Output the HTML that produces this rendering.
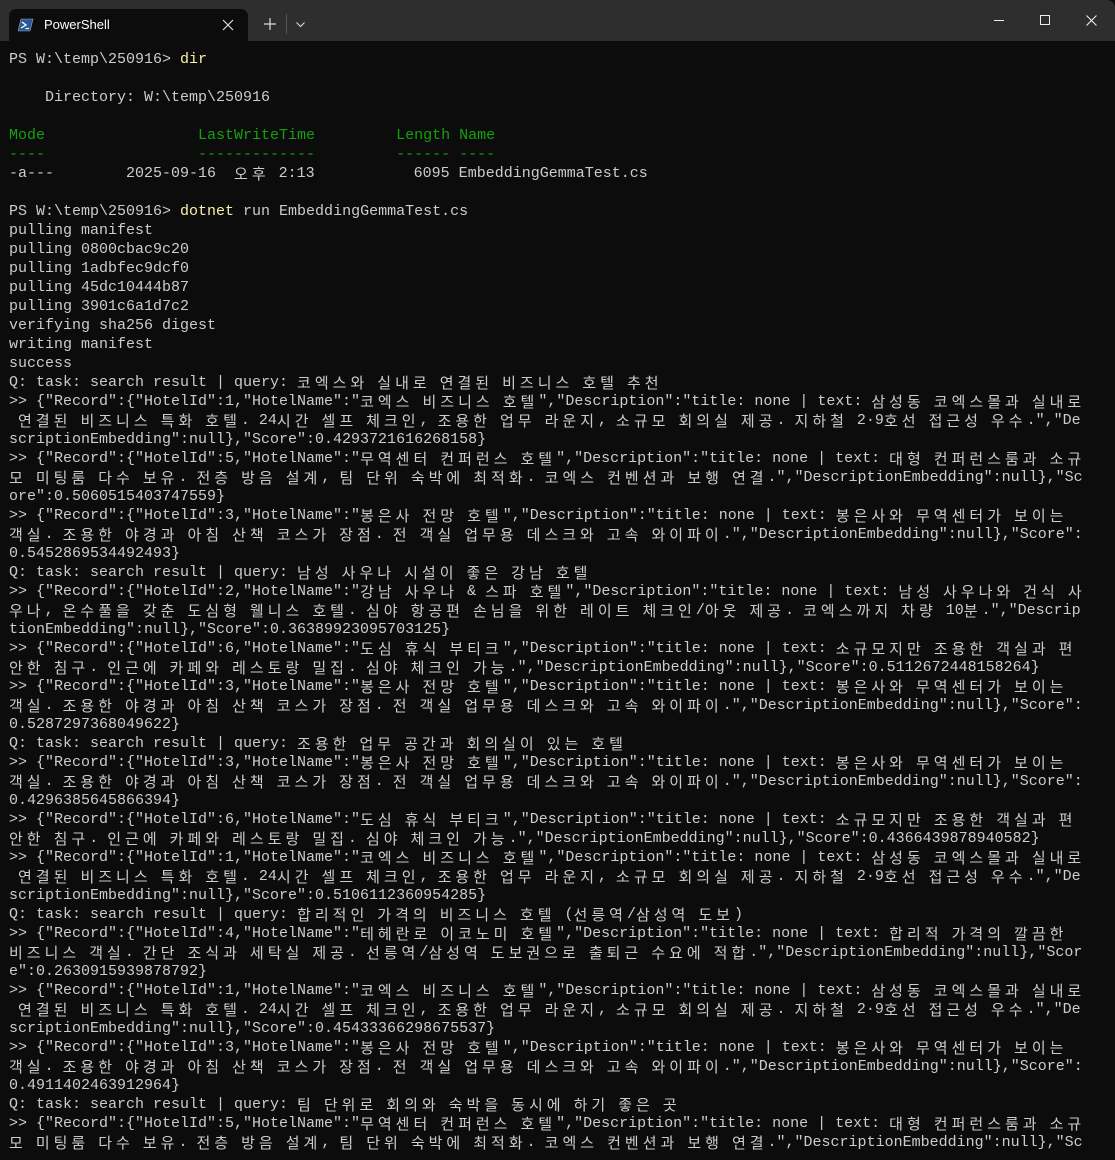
<!DOCTYPE html>
<html><head><meta charset="utf-8">
<style>
html,body{margin:0;padding:0;background:#0c0c0c;width:1115px;height:1160px;overflow:hidden}
#tb{position:absolute;left:0;top:0;width:1115px;height:41px;background:#2e2e2e;border-top-right-radius:8px}
#tab{position:absolute;left:9px;top:9px;width:239px;height:32px;background:#0c0c0c;border-radius:7px 7px 0 0}
#tab .t{position:absolute;left:35px;top:8px;color:#fff;font:13px "Liberation Sans",sans-serif}
pre{position:absolute;left:9px;top:50px;margin:0;color:#cccccc;font:15px/19px "Liberation Mono",monospace;white-space:pre}
.g{color:#13a10e}.y{color:#f9f1a5}
.k{font-family:"Noto Sans CJK KR","NanumGothic",sans-serif;letter-spacing:4px;font-size:15px;line-height:19px;vertical-align:top;display:inline-block;height:19px;overflow:visible}
</style></head><body>
<div id="tb">
 <div id="tab">
  <svg style="position:absolute;left:9px;top:9px" width="16" height="14" viewBox="0 0 16 14"><path d="M3 1h12l-3 12H0z" fill="#2b5797" stroke="#9ab" stroke-width=".6"/><path d="M4 4l4 3-5 3" stroke="#fff" stroke-width="1.3" fill="none"/><path d="M7.5 10.5h3.5" stroke="#fff" stroke-width="1.2"/></svg>
  <span class="t">PowerShell</span>
  <svg style="position:absolute;left:213px;top:10px" width="12" height="12"><path d="M1 1l10 10M11 1L1 11" stroke="#ddd" stroke-width="1.2"/></svg>
 </div>
 <svg style="position:absolute;left:264px;top:18px" width="12" height="12"><path d="M6 0v12M0 6h12" stroke="#ddd" stroke-width="1.2"/></svg>
 <div style="position:absolute;left:286px;top:14px;width:1px;height:20px;background:#555"></div>
 <svg style="position:absolute;left:296px;top:22px" width="9" height="6"><path d="M.5 .5l4 4 4-4" stroke="#ddd" stroke-width="1.1" fill="none"/></svg>
 <div style="position:absolute;left:994px;top:20px;width:10px;height:1px;background:#eee"></div>
 <div style="position:absolute;left:1040px;top:15px;width:8px;height:8px;border:1px solid #eee"></div>
 <svg style="position:absolute;left:1086px;top:15px" width="11" height="11"><path d="M.5 .5l10 10M10.5 .5l-10 10" stroke="#eee" stroke-width="1.1"/></svg>
</div>
<pre id="p">PS W:\temp\250916&gt; <span class="y">dir</span>

    Directory: W:\temp\250916

<span class="g">Mode                 LastWriteTime         Length Name</span>
<span class="g">----                 -------------         ------ ----</span>
-a---        2025-09-16  오후 2:13           6095 EmbeddingGemmaTest.cs

PS W:\temp\250916&gt; <span class="y">dotnet</span> run EmbeddingGemmaTest.cs
pulling manifest
pulling 0800cbac9c20
pulling 1adbfec9dcf0
pulling 45dc10444b87
pulling 3901c6a1d7c2
verifying sha256 digest
writing manifest
success
Q: task: search result | query: 코엑스와 실내로 연결된 비즈니스 호텔 추천
&gt;&gt; {"Record":{"HotelId":1,"HotelName":"코엑스 비즈니스 호텔","Description":"title: none | text: 삼성동 코엑스몰과 실내로
 연결된 비즈니스 특화 호텔. 24시간 셀프 체크인, 조용한 업무 라운지, 소규모 회의실 제공. 지하철 2·9호선 접근성 우수.","De
scriptionEmbedding":null},"Score":0.4293721616268158}
&gt;&gt; {"Record":{"HotelId":5,"HotelName":"무역센터 컨퍼런스 호텔","Description":"title: none | text: 대형 컨퍼런스룸과 소규
모 미팅룸 다수 보유. 전층 방음 설계, 팀 단위 숙박에 최적화. 코엑스 컨벤션과 보행 연결.","DescriptionEmbedding":null},"Sc
ore":0.5060515403747559}
&gt;&gt; {"Record":{"HotelId":3,"HotelName":"봉은사 전망 호텔","Description":"title: none | text: 봉은사와 무역센터가 보이는
객실. 조용한 야경과 아침 산책 코스가 장점. 전 객실 업무용 데스크와 고속 와이파이.","DescriptionEmbedding":null},"Score":
0.5452869534492493}
Q: task: search result | query: 남성 사우나 시설이 좋은 강남 호텔
&gt;&gt; {"Record":{"HotelId":2,"HotelName":"강남 사우나 &amp; 스파 호텔","Description":"title: none | text: 남성 사우나와 건식 사
우나, 온수풀을 갖춘 도심형 웰니스 호텔. 심야 항공편 손님을 위한 레이트 체크인/아웃 제공. 코엑스까지 차량 10분.","Descrip
tionEmbedding":null},"Score":0.36389923095703125}
&gt;&gt; {"Record":{"HotelId":6,"HotelName":"도심 휴식 부티크","Description":"title: none | text: 소규모지만 조용한 객실과 편
안한 침구. 인근에 카페와 레스토랑 밀집. 심야 체크인 가능.","DescriptionEmbedding":null},"Score":0.5112672448158264}
&gt;&gt; {"Record":{"HotelId":3,"HotelName":"봉은사 전망 호텔","Description":"title: none | text: 봉은사와 무역센터가 보이는
객실. 조용한 야경과 아침 산책 코스가 장점. 전 객실 업무용 데스크와 고속 와이파이.","DescriptionEmbedding":null},"Score":
0.5287297368049622}
Q: task: search result | query: 조용한 업무 공간과 회의실이 있는 호텔
&gt;&gt; {"Record":{"HotelId":3,"HotelName":"봉은사 전망 호텔","Description":"title: none | text: 봉은사와 무역센터가 보이는
객실. 조용한 야경과 아침 산책 코스가 장점. 전 객실 업무용 데스크와 고속 와이파이.","DescriptionEmbedding":null},"Score":
0.4296385645866394}
&gt;&gt; {"Record":{"HotelId":6,"HotelName":"도심 휴식 부티크","Description":"title: none | text: 소규모지만 조용한 객실과 편
안한 침구. 인근에 카페와 레스토랑 밀집. 심야 체크인 가능.","DescriptionEmbedding":null},"Score":0.4366439878940582}
&gt;&gt; {"Record":{"HotelId":1,"HotelName":"코엑스 비즈니스 호텔","Description":"title: none | text: 삼성동 코엑스몰과 실내로
 연결된 비즈니스 특화 호텔. 24시간 셀프 체크인, 조용한 업무 라운지, 소규모 회의실 제공. 지하철 2·9호선 접근성 우수.","De
scriptionEmbedding":null},"Score":0.5106112360954285}
Q: task: search result | query: 합리적인 가격의 비즈니스 호텔 (선릉역/삼성역 도보)
&gt;&gt; {"Record":{"HotelId":4,"HotelName":"테헤란로 이코노미 호텔","Description":"title: none | text: 합리적 가격의 깔끔한
비즈니스 객실. 간단 조식과 세탁실 제공. 선릉역/삼성역 도보권으로 출퇴근 수요에 적합.","DescriptionEmbedding":null},"Scor
e":0.2630915939878792}
&gt;&gt; {"Record":{"HotelId":1,"HotelName":"코엑스 비즈니스 호텔","Description":"title: none | text: 삼성동 코엑스몰과 실내로
 연결된 비즈니스 특화 호텔. 24시간 셀프 체크인, 조용한 업무 라운지, 소규모 회의실 제공. 지하철 2·9호선 접근성 우수.","De
scriptionEmbedding":null},"Score":0.45433366298675537}
&gt;&gt; {"Record":{"HotelId":3,"HotelName":"봉은사 전망 호텔","Description":"title: none | text: 봉은사와 무역센터가 보이는
객실. 조용한 야경과 아침 산책 코스가 장점. 전 객실 업무용 데스크와 고속 와이파이.","DescriptionEmbedding":null},"Score":
0.4911402463912964}
Q: task: search result | query: 팀 단위로 회의와 숙박을 동시에 하기 좋은 곳
&gt;&gt; {"Record":{"HotelId":5,"HotelName":"무역센터 컨퍼런스 호텔","Description":"title: none | text: 대형 컨퍼런스룸과 소규
모 미팅룸 다수 보유. 전층 방음 설계, 팀 단위 숙박에 최적화. 코엑스 컨벤션과 보행 연결.","DescriptionEmbedding":null},"Sc</pre>
<script>
(function(){
var re=/[\uAC00-\uD7A3]+/g;
var w=document.createTreeWalker(document.getElementById('p'),NodeFilter.SHOW_TEXT,null,false);
var nodes=[];while(w.nextNode())nodes.push(w.currentNode);
nodes.forEach(function(n){
 var s=n.nodeValue;if(!/[\uAC00-\uD7A3]/.test(s))return;
 var f=document.createDocumentFragment(),last=0,m;re.lastIndex=0;
 while((m=re.exec(s))){
  if(m.index>last)f.appendChild(document.createTextNode(s.slice(last,m.index)));
  var sp=document.createElement('span');sp.className='k';sp.textContent=m[0];f.appendChild(sp);
  last=m.index+m[0].length;
 }
 if(last<s.length)f.appendChild(document.createTextNode(s.slice(last)));
 n.parentNode.replaceChild(f,n);
});
})();
</script>
</body></html>
